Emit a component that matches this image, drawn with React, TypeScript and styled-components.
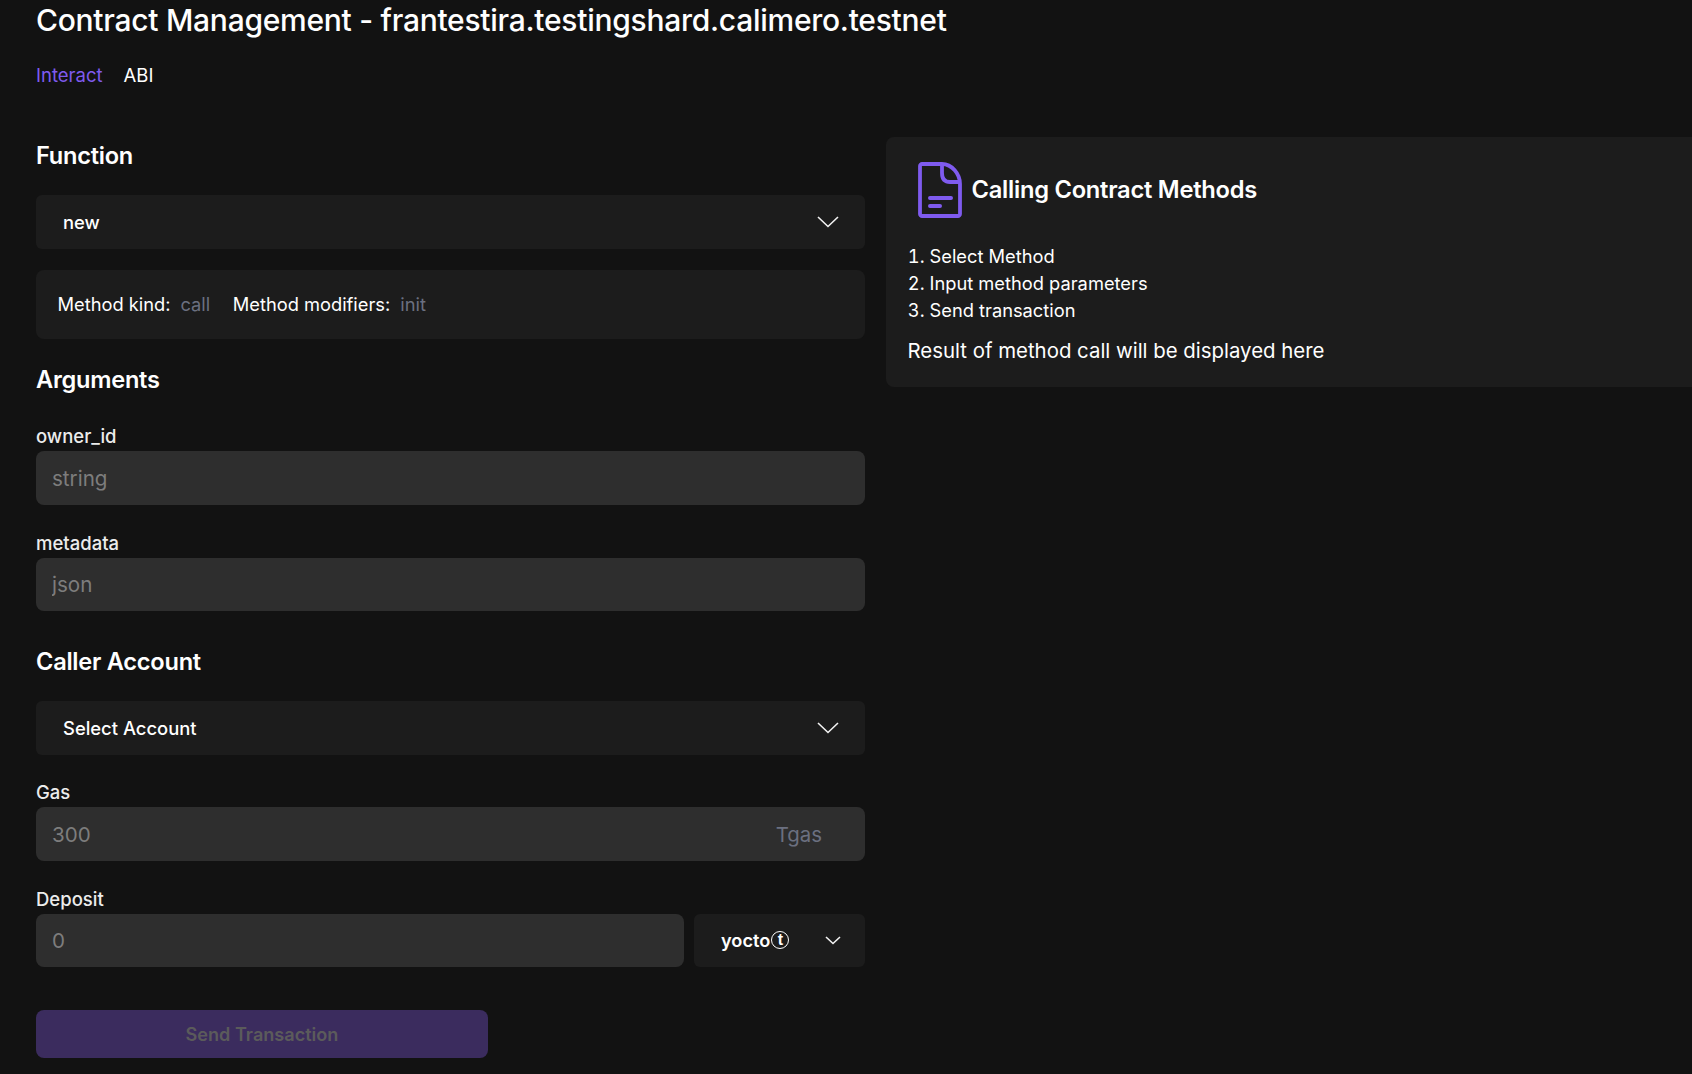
import styled, { createGlobalStyle } from "styled-components";

const Global = createGlobalStyle`
  html, body {
    margin: 0;
    background: #121212;
    overflow: hidden;
  }
  body {
    font-family: Inter, "Liberation Sans", sans-serif;
    color: #fff;
  }
`;

const Page = styled.div`
  width: 1692px;
  height: 1074px;
  overflow: hidden;
  box-sizing: border-box;
  padding-left: 36px;
  background: #121212;
`;

const Title = styled.h1`
  margin: 0;
  height: 40px;
  font-size: 30px;
  line-height: 40px;
  font-weight: 500;
  letter-spacing: -0.27px;
`;

const Tabs = styled.div`
  display: flex;
  gap: 21px;
  margin-top: 25px;
  height: 20px;
  font-size: 18.5px;
  line-height: 20px;
`;

const Tab = styled.span<{ $active?: boolean }>`
  color: ${(p) => (p.$active ? "#7f5bef" : "#fff")};
`;

const Columns = styled.div`
  display: flex;
  align-items: flex-start;
  gap: 21px;
  margin-top: 52px;
`;

const Left = styled.div`
  width: 829px;
  flex: none;
  padding-top: 5px;
`;

const Heading = styled.h2<{ $top?: number }>`
  margin: ${(p) => p.$top ?? 0}px 0 0;
  height: 28px;
  font-size: 23.6px;
  line-height: 28px;
  font-weight: 600;
  letter-spacing: -0.25px;
`;

const SelectBox = styled.div`
  height: 53.5px;
  margin-top: 25px;
  box-sizing: border-box;
  padding: 0 26px 0 27px;
  display: flex;
  align-items: center;
  justify-content: space-between;
  background: #1c1c1c;
  border-radius: 6px;
  font-size: 18.4px;
  font-weight: 500;
`;

const InfoBox = styled.div`
  height: 69px;
  margin-top: 21.5px;
  box-sizing: border-box;
  padding: 0 21.5px 2px;
  display: flex;
  align-items: center;
  background: #1c1c1c;
  border-radius: 8px;
  font-size: 18.3px;
`;

const InfoLabel = styled.span`
  margin-right: 10px;
`;

const InfoValue = styled.span`
  color: #6b7080;
  margin-right: 22.5px;
`;

const Field = styled.div<{ $top: number }>`
  margin-top: ${(p) => p.$top}px;
`;

const Label = styled.label`
  display: block;
  height: 22px;
  margin-bottom: 4px;
  font-size: 18.5px;
  line-height: 22px;
  font-weight: 500;
  color: #ececec;
`;

const InputWrap = styled.div`
  position: relative;
  flex: 1;
`;

const Input = styled.input`
  display: block;
  width: 100%;
  height: 53.5px;
  box-sizing: border-box;
  padding: 1px 16px 0;
  border: none;
  outline: none;
  border-radius: 8px;
  background: #2e2e2e;
  color: #fff;
  font-family: inherit;
  font-size: 20.6px;
  &::placeholder {
    color: #7d7d7d;
    opacity: 1;
  }
`;

const Suffix = styled.span`
  position: absolute;
  right: 43px;
  top: 50%;
  transform: translateY(-50%);
  font-size: 20.4px;
  color: #6b7080;
`;

const DepositRow = styled.div`
  display: flex;
  gap: 10px;
`;

const UnitSelect = styled.div`
  width: 171px;
  flex: none;
  height: 53px;
  box-sizing: border-box;
  padding: 0 24px 0 27px;
  display: flex;
  align-items: center;
  justify-content: space-between;
  background: #1c1c1c;
  border-radius: 6px;
  font-size: 18.2px;
  font-weight: 600;
`;

const Unit = styled.span`
  display: flex;
  align-items: center;
`;

const CircledT = styled.span`
  width: 18px;
  height: 18px;
  box-sizing: border-box;
  border: 1px solid #fff;
  border-radius: 50%;
  margin-left: 1px;
  display: flex;
  align-items: center;
  justify-content: center;
  font-family: "Liberation Sans", sans-serif;
  font-size: 16px;
  font-weight: 700;
  line-height: 1;
`;

const SendButton = styled.button`
  display: block;
  width: 452px;
  height: 48px;
  margin-top: 43px;
  border: none;
  border-radius: 8px;
  background: #3b2c5e;
  color: #5b5b5b;
  font-family: inherit;
  font-size: 18.1px;
  font-weight: 600;
`;

const HelpPanel = styled.aside`
  flex: 1;
  height: 250px;
  box-sizing: border-box;
  padding: 25px 21.5px 0;
  background: #1c1c1c;
  border-radius: 8px 0 0 8px;
`;

const HelpHeader = styled.div`
  display: flex;
  align-items: center;
  gap: 10px;
  padding-left: 10px;
`;

const HelpTitle = styled.h3`
  margin: 0 0 2px;
  font-size: 23.7px;
  font-weight: 600;
  letter-spacing: -0.25px;
`;

const Steps = styled.ol`
  margin: 25px 0 0;
  padding: 0 0 0 22px;
  font-size: 18.3px;
  line-height: 27px;
`;

const Result = styled.p`
  margin: 13px 0 0;
  font-size: 20.4px;
  line-height: 28px;
`;

function Chevron({ size }: { size: "large" | "small" }) {
  const w = size === "large" ? 22 : 16;
  const h = size === "large" ? 12 : 9;
  return (
    <svg width={w} height={h} viewBox={`0 0 ${w} ${h}`} fill="none">
      <path
        d={`M1 1L${w / 2} ${h - 1.5}L${w - 1} 1`}
        stroke="#f2f2f2"
        strokeWidth="1.6"
      />
    </svg>
  );
}

function DocIcon() {
  return (
    <svg width="44" height="56" viewBox="0 0 44 56" fill="none">
      <path
        d="M4 2H24C34 2 42 12 42 22V52C42 53 41 54 40 54H4C3 54 2 53 2 52V4C2 3 3 2 4 2Z"
        stroke="#7f5bef"
        strokeWidth="3.8"
      />
      <path
        d="M24 3V11C24 17 27 20 32 20H41"
        stroke="#7f5bef"
        strokeWidth="3.8"
      />
      <path
        d="M12 36H33M12 44H22"
        stroke="#7f5bef"
        strokeWidth="4"
        strokeLinecap="round"
      />
    </svg>
  );
}

export default function App() {
  return (
    <Page>
      <Global />
      <Title>Contract Management - frantestira.testingshard.calimero.testnet</Title>
      <Tabs>
        <Tab $active>Interact</Tab>
        <Tab>ABI</Tab>
      </Tabs>
      <Columns>
        <Left>
          <Heading>Function</Heading>
          <SelectBox>
            new
            <Chevron size="large" />
          </SelectBox>
          <InfoBox>
            <InfoLabel>Method kind:</InfoLabel>
            <InfoValue>call</InfoValue>
            <InfoLabel>Method modifiers:</InfoLabel>
            <InfoValue>init</InfoValue>
          </InfoBox>
          <Heading $top={27}>Arguments</Heading>
          <Field $top={31}>
            <Label>owner_id</Label>
            <Input placeholder="string" />
          </Field>
          <Field $top={27}>
            <Label>metadata</Label>
            <Input placeholder="json" />
          </Field>
          <Heading $top={37}>Caller Account</Heading>
          <SelectBox>
            Select Account
            <Chevron size="large" />
          </SelectBox>
          <Field $top={26.5}>
            <Label>Gas</Label>
            <InputWrap>
              <Input placeholder="300" />
              <Suffix>Tgas</Suffix>
            </InputWrap>
          </Field>
          <Field $top={27}>
            <Label>Deposit</Label>
            <DepositRow>
              <InputWrap>
                <Input placeholder="0" />
              </InputWrap>
              <UnitSelect>
                <Unit>
                  yocto<CircledT>t</CircledT>
                </Unit>
                <Chevron size="small" />
              </UnitSelect>
            </DepositRow>
          </Field>
          <SendButton disabled>Send Transaction</SendButton>
        </Left>
        <HelpPanel>
          <HelpHeader>
            <DocIcon />
            <HelpTitle>Calling Contract Methods</HelpTitle>
          </HelpHeader>
          <Steps>
            <li>Select Method</li>
            <li>Input method parameters</li>
            <li>Send transaction</li>
          </Steps>
          <Result>Result of method call will be displayed here</Result>
        </HelpPanel>
      </Columns>
    </Page>
  );
}
